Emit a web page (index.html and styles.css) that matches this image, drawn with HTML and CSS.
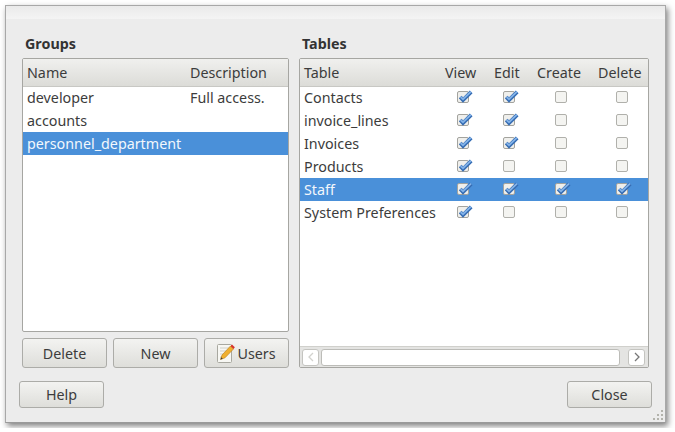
FILE: index.html
```html
<!DOCTYPE html>
<html lang="en">
<head>
    <meta charset="UTF-8">
    <title>Permissions</title>
    <link rel="stylesheet" href="styles.css">
</head>
<body>
    <svg class="defs" width="0" height="0">
        <symbol id="on" viewBox="0 0 16 15">
            <rect x="0.5" y="1.5" width="11" height="11" rx="1.5" fill="#efefec" stroke="#a3a39e"/>
            <path d="M3.2 7 L6 10 L14.2 1.8" fill="none" stroke="#356cb3" stroke-width="3.8"/>
            <path d="M3.6 7 L6 9.2 L14 1.6" fill="none" stroke="#82b2e8" stroke-width="1.8"/>
        </symbol>
        <symbol id="off" viewBox="0 0 16 15">
            <rect x="0.5" y="1.5" width="11" height="11" rx="1.5" fill="#f4f4f1" stroke="#b0b0ab"/>
        </symbol>
    </svg>

    <div class="window">
        <div class="titlebar"></div>
        <div class="panes">
            <!-- left side -->
            <section class="groups">
                <h2>Groups</h2>
                <div class="list">
                    <table class="grid">
                        <thead>
                            <tr><th class="name">Name</th><th>Description</th></tr>
                        </thead>
                        <tbody>
                            <tr><td>developer</td><td>Full access.</td></tr>
                            <tr><td>accounts</td><td></td></tr>
                            <tr class="sel"><td>personnel_department</td><td></td></tr>
                        </tbody>
                    </table>
                </div>
                <div class="btnrow">
                    <button>Delete</button>
                    <button>New</button>
                    <button class="users">
                        <svg width="18" height="20" viewBox="0 0 18 20">
                            <rect x="0.5" y="1.5" width="14" height="18" rx="1" fill="#f7f7f3" stroke="#a8a8a0"/>
                            <path d="M3 5h9M3 8h7M3 11h4M3 14h3" stroke="#cfcfc8"/>
                            <path d="M3.5 16.5 L5 12 L13.5 3 L16.5 6 L8 14.8 Z" fill="#f0b030" stroke="#b97a14" stroke-width="0.6"/>
                            <path d="M13.5 3 L15 1.4 L17.8 4.2 L16.5 6 Z" fill="#d8322a"/>
                            <path d="M3.5 16.5 L4.2 14.2 L5.8 15.8 Z" fill="#3a3a3a"/>
                        </svg>
                        Users
                    </button>
                </div>
            </section>

            <!-- right side -->
            <section class="tables">
                <h2>Tables</h2>
                <div class="list">
                    <div class="scrollarea">
                        <table class="grid perms">
                            <thead>
                                <tr><th class="name">Table</th><th>View</th><th>Edit</th><th>Create</th><th>Delete</th></tr>
                            </thead>
                            <tbody>
                                <tr><td>Contacts</td>
                                    <td><svg class="chk"><use href="#on"/></svg></td><td><svg class="chk"><use href="#on"/></svg></td><td><svg class="chk"><use href="#off"/></svg></td><td><svg class="chk"><use href="#off"/></svg></td></tr>
                                <tr><td>invoice_lines</td>
                                    <td><svg class="chk"><use href="#on"/></svg></td><td><svg class="chk"><use href="#on"/></svg></td><td><svg class="chk"><use href="#off"/></svg></td><td><svg class="chk"><use href="#off"/></svg></td></tr>
                                <tr><td>Invoices</td>
                                    <td><svg class="chk"><use href="#on"/></svg></td><td><svg class="chk"><use href="#on"/></svg></td><td><svg class="chk"><use href="#off"/></svg></td><td><svg class="chk"><use href="#off"/></svg></td></tr>
                                <tr><td>Products</td>
                                    <td><svg class="chk"><use href="#on"/></svg></td><td><svg class="chk"><use href="#off"/></svg></td><td><svg class="chk"><use href="#off"/></svg></td><td><svg class="chk"><use href="#off"/></svg></td></tr>
                                <tr class="sel"><td>Staff</td>
                                    <td><svg class="chk"><use href="#on"/></svg></td><td><svg class="chk"><use href="#on"/></svg></td><td><svg class="chk"><use href="#on"/></svg></td><td><svg class="chk"><use href="#on"/></svg></td></tr>
                                <tr><td>System Preferences</td>
                                    <td><svg class="chk"><use href="#on"/></svg></td><td><svg class="chk"><use href="#off"/></svg></td><td><svg class="chk"><use href="#off"/></svg></td><td><svg class="chk"><use href="#off"/></svg></td></tr>
                            </tbody>
                        </table>
                    </div>
                    <div class="hscroll">
                        <span class="arrow">
                            <svg width="6" height="10" viewBox="0 0 6 10"><path d="M5 1 L1 5 L5 9" fill="none" stroke="#d2d2ce" stroke-width="1.3"/></svg>
                        </span>
                        <span class="thumb"></span>
                        <span class="arrow">
                            <svg width="6" height="10" viewBox="0 0 6 10"><path d="M1 1 L5 5 L1 9" fill="none" stroke="#777" stroke-width="1.3"/></svg>
                        </span>
                    </div>
                </div>
            </section>
        </div>

        <div class="footer">
            <button>Help</button>
            <button>Close</button>
        </div>
        <!-- resize grip, sits on the window corner -->
        <svg class="grip" width="11" height="11" viewBox="0 0 11 11" fill="#b3b3ac">
            <rect x="8" y="0" width="2" height="2"/>
            <rect x="4" y="4" width="2" height="2"/><rect x="8" y="4" width="2" height="2"/>
            <rect x="0" y="8" width="2" height="2"/><rect x="4" y="8" width="2" height="2"/><rect x="8" y="8" width="2" height="2"/>
        </svg>
    </div>
</body>
</html>
```

FILE: styles.css
```css
*{
    margin: 0;
    padding: 0;
    box-sizing: border-box;
}
body{
    padding: 5px;
    background-color: #fff;
    font-family: "Noto Sans", "Open Sans", sans-serif;
    font-size: 14.3px;
    color: #3c3c3c;
}
.defs{
    display: block;
    height: 0;
}
.window{
    position: relative;
    width: 661px;
    height: 418px;
    background-color: #ececec;
    border: 1px solid #a8a8a8;
    border-bottom-color: #9a9a9a;
    box-shadow: 2px 3px 6px rgba(0,0,0,0.5);
    display: flex;
    flex-direction: column;
}
.titlebar{
    height: 13px;
    background: linear-gradient(#eaeaea, #f4f4f4);
}
.panes{
    display: flex;
    gap: 10px;
    padding: 0 16px 0 16px;
    height: 349px;
}
.groups{
    width: 267px;
    display: flex;
    flex-direction: column;
}
.tables{
    width: 350px;
    display: flex;
    flex-direction: column;
}
h2{
    font-size: 14.3px;
    font-weight: 700;
    color: #333;
    height: 39px;
    padding: 15px 0 0 3px;
    line-height: 20px;
}
.list{
    flex: 1;
    background-color: #fff;
    border: 1px solid #a6a6a2;
    border-radius: 2px;
    overflow: hidden;
    display: flex;
    flex-direction: column;
}
.grid{
    width: 100%;
    border-collapse: collapse;
    table-layout: fixed;
}
.grid th{
    height: 27px;
    font-weight: 400;
    text-align: left;
    padding-left: 4px;
    background: linear-gradient(#f0f0ee, #dcdcd8);
    border-bottom: 1px solid #c8c8c4;
}
.grid td{
    height: 23px;
    padding-left: 4px;
    white-space: nowrap;
}
.grid .name{
    width: 163px;
}
.sel td{
    background-color: #4a90d9;
    color: #f2f7fc;
}
.perms .name{
    width: 141px;
}
.perms th:nth-child(2), .perms th:nth-child(3){
    width: 46px;
}
.perms th:nth-child(3){
    padding-left: 7px;
}
.perms th:nth-child(4){
    width: 61px;
}
.perms td + td{
    padding-left: 0;
    text-align: center;
}
.chk{
    display: block;
    width: 16px;
    height: 15px;
    margin-left: 16px;
}
.perms td:nth-child(4) .chk, .perms td:nth-child(5) .chk{
    margin-left: 22px;
}
.scrollarea{
    flex: 1;
}
.hscroll{
    display: flex;
    align-items: center;
    gap: 2px;
    height: 21px;
    padding: 0 3px 0 2px;
    background-color: #e4e4e2;
    border-top: 1px solid #d0d0cc;
}
.hscroll .arrow{
    width: 17px;
    height: 17px;
    background-color: #fff;
    border: 1px solid #c4c4c0;
    border-radius: 3px;
    display: flex;
    align-items: center;
    justify-content: center;
}
.hscroll .thumb{
    flex: 1;
    height: 17px;
    margin-right: 6px;
    background-color: #fff;
    border: 1px solid #bcbcb8;
    border-radius: 3px;
}
button{
    width: 85px;
    font-family: inherit;
    font-size: 14.3px;
    color: #3c3c3c;
    background: linear-gradient(#f3f3f1, #dededa);
    border: 1px solid #acaca8;
    border-radius: 3px;
}
.btnrow{
    display: flex;
    justify-content: space-between;
    height: 30px;
    margin-top: 6px;
}
.users{
    display: flex;
    align-items: center;
    justify-content: center;
    gap: 2px;
}
.footer{
    display: flex;
    justify-content: space-between;
    padding: 13px 13px 0 13px;
    height: 40px;
}
.grip{
    position: absolute;
    right: 1px;
    bottom: 1px;
}
```
